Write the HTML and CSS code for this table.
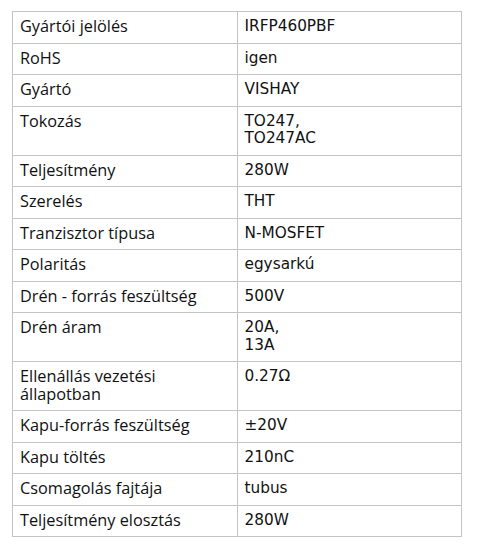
FILE: index.html
```html
<!DOCTYPE html>
<html lang="hu">
<head>
<meta charset="utf-8">
<title>Termékadatok</title>
<link rel="stylesheet" href="styles.css">
</head>
<body>
<table class="spec">
  <tbody>
    <tr><td class="k">Gyártói jelölés</td><td class="v">IRFP460PBF</td></tr>
    <tr><td class="k">RoHS</td><td class="v">igen</td></tr>
    <tr><td class="k">Gyártó</td><td class="v">VISHAY</td></tr>
    <tr><td class="k">Tokozás</td><td class="v">TO247,<br>TO247AC</td></tr>
    <tr><td class="k">Teljesítmény</td><td class="v">280W</td></tr>
    <tr><td class="k">Szerelés</td><td class="v">THT</td></tr>
    <tr><td class="k">Tranzisztor típusa</td><td class="v">N-MOSFET</td></tr>
    <tr><td class="k">Polaritás</td><td class="v">egysarkú</td></tr>
    <tr><td class="k">Drén - forrás feszültség</td><td class="v">500V</td></tr>
    <tr><td class="k">Drén áram</td><td class="v">20A,<br>13A</td></tr>
    <tr><td class="k">Ellenállás vezetési állapotban</td><td class="v">0.27Ω</td></tr>
    <tr><td class="k">Kapu-forrás feszültség</td><td class="v">±20V</td></tr>
    <tr><td class="k">Kapu töltés</td><td class="v">210nC</td></tr>
    <tr><td class="k">Csomagolás fajtája</td><td class="v">tubus</td></tr>
    <tr><td class="k">Teljesítmény elosztás</td><td class="v">280W</td></tr>
  </tbody>
</table>
</body>
</html>
```
FILE: styles.css
```css
html, body {
  margin: 0;
  background: #ffffff;
}
body {
  padding: 11px 0 0 12px;
  color: #111111;
}
.spec {
  border-collapse: collapse;
  width: 450px;
  table-layout: fixed;
}
.spec td {
  border: 1px solid #c4c4c4;
  vertical-align: top;
  padding: 6px 7px 7px 7px;
  line-height: 17.5px;
  width: 50%;
}
.spec .k {
  font-family: "Open Sans", sans-serif;
  font-size: 16.3px;
}
.spec .v {
  font-family: "DejaVu Sans", Verdana, sans-serif;
  font-size: 15.3px;
}
```
